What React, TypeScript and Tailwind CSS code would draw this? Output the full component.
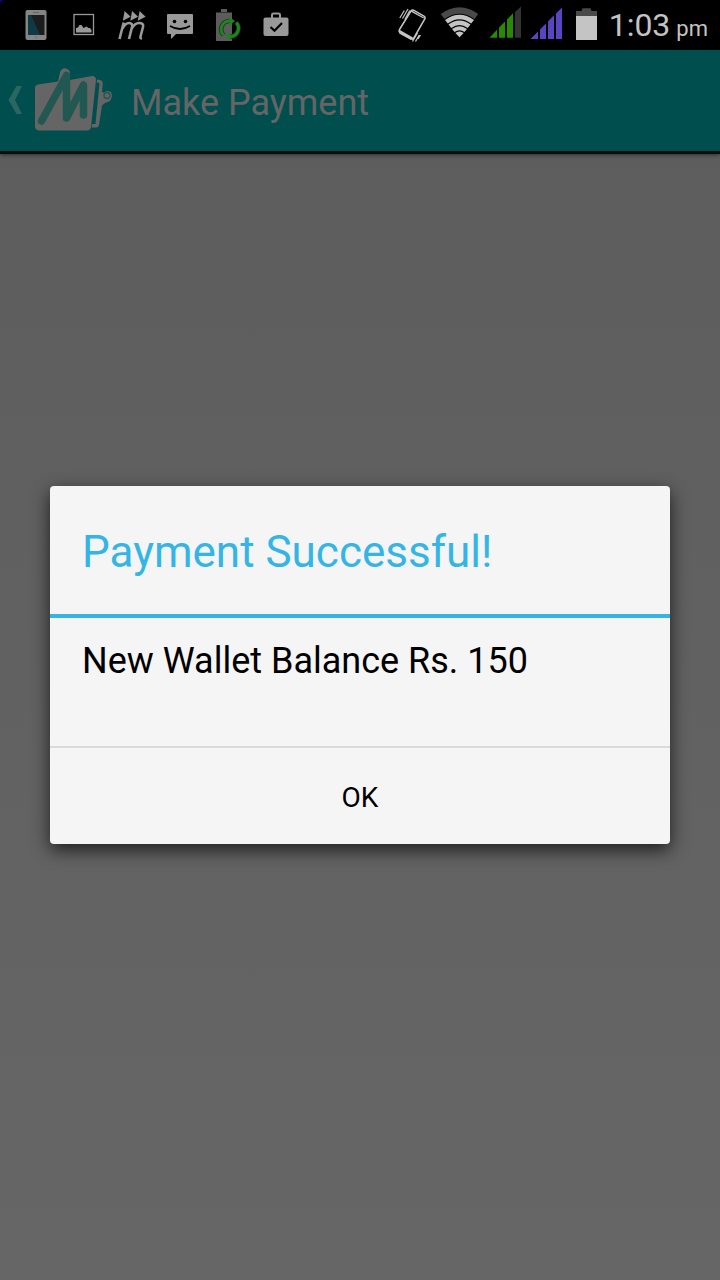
import React from "react";

function NotificationIcons() {
  return (
    <div className="flex pl-3">
      <svg viewBox="12 0 48 50" className="h-[50px] w-12" aria-hidden="true">
        <rect x="25.500" y="10" width="21" height="30" rx="2" fill="#858585" />
        <rect x="28" y="15" width="16.5" height="20" fill="#1c1c1c" />
        <path d="M28 15h3l9 20H28z" fill="#0e3a45" />
        <path d="M33 12.5h6" stroke="#666" strokeWidth="1" />
        <circle cx="36" cy="37.5" r="1.2" fill="#777" />
      </svg>
      <svg viewBox="60 0 48 50" className="h-[50px] w-12" aria-hidden="true">
        <rect x="74" y="14.5" width="19.5" height="20" fill="none" stroke="#999" strokeWidth="1.3" />
        <path d="M76 32.500v-4.500l2-.5 1.500-2.500h2l2 3 3-1.500 2 1.500h1.500l1.500 2v2.500z" fill="#999" />
      </svg>
      <svg viewBox="108 0 48 50" className="h-[50px] w-12" aria-hidden="true">
        <path d="M122.800 20.800l1.800-9.800 6 5.800zM130.300 20.800l1.800-9.800 6 5.800zM137.800 20.800l1.800-9.800 6 5.800z" fill="#999" />
        <path
          d="M119.500 39l4.200-16.500M122.500 28.500q3-5.500 6.500-5.500 4 0 3 4l-3 12M131.800 28.500q3-5.500 7.200-5.500 5 0 4 4l-2.500 9.500q-.5 2 1.500 1.800"
          fill="none"
          stroke="#999"
          strokeWidth="2.600"
        />
      </svg>
      <svg viewBox="156 0 48 50" className="h-[50px] w-12" aria-hidden="true">
        <path d="M168 14h24q1 0 1 1v18q0 1-1 1h-16l-5 5v-5h-3q-1 0-1-1V15q0-1 1-1z" fill="#999" />
        <circle cx="174.500" cy="21.500" r="1.800" />
        <circle cx="185.500" cy="21.500" r="1.800" />
        <path d="M170 26q10 6 20 0" fill="none" stroke="#000" strokeWidth="1.800" />
      </svg>
      <svg viewBox="204 0 48 50" className="h-[50px] w-12" aria-hidden="true">
        <path d="M221 9h6v3.500h5V41h-16V12.500h5z" fill="#5c5c5c" />
        <path d="M220 12.500h8" stroke="#333" strokeWidth="1" />
        <g fill="none" stroke="#123c12" strokeWidth="4.600">
          <path d="M223.500 35a8.300 8.300 0 0 1 6.500-14M236.200 22.500a8.300 8.300 0 0 1-6.200 14" />
        </g>
        <g fill="none" stroke="#238023" strokeWidth="3">
          <path d="M223.500 35a8.300 8.300 0 0 1 6.500-14M236.200 22.500a8.300 8.300 0 0 1-6.200 14" />
        </g>
        <path d="M229.500 17l5.500 4-5.500 4.500zM230.500 40.500l-5.500-4 5.500-4.500z" fill="#238023" />
      </svg>
      <svg viewBox="252 0 48 50" className="h-[50px] w-12" aria-hidden="true">
        <rect x="263.500" y="17.500" width="25" height="18.500" rx="2" fill="#999" />
        <path d="M272 18v-3q0-1.500 1.500-1.500h5q1.500 0 1.500 1.500v3" fill="none" stroke="#999" strokeWidth="2" />
        <path d="M270.500 27l4 3.800 7.500-7.800" fill="none" stroke="#000" strokeWidth="2.200" />
      </svg>
    </div>
  );
}

function SystemIcons() {
  return (
    <div className="flex items-center">
      <svg viewBox="396 0 204 50" className="h-[50px] w-[204px]" aria-hidden="true">
        <g fill="none" stroke="#c4c4c4">
          <path
            d="M400.500 29.500l11.500-18.500q1-1.500 2.500-.8l10.500 6q1.700 1 .8 2.800l-11 19q-1 1.700-2.700.8l-10.500-6q-2-1.300-1.100-3.300z"
            strokeWidth="1.500"
          />
          <path d="M403.500 18.500l5.500-9.500M405.800 19.500l5-9M400.800 18l4.500-7.500M413.500 41.500l5-8.500M416.500 41.500l3.800-6.500M419 39l2.500-4" strokeWidth="1.200" />
        </g>
        <path d="M400 29.500l14 8-2 2.500-11-6q-2-1.500-1-4.500zM412 10l13 7.500-.5 1-13-7z" fill="#c4c4c4" />
        <path d="M441.800 14q18.700-13.500 37.400 0l-3.700 5q-15-10.500-30 0z" fill="#494949" />
        <path d="M446 20q14.500-10.500 29 0l-2.800 3.500q-11.700-8.500-23.400 0z" fill="#c4c4c4" />
        <path d="M449.500 24.500q11-8 22 0l-2.800 3.500q-8.200-6-16.400 0z" fill="#c4c4c4" />
        <path d="M453 29q7.500-5.300 15 0l-2.500 3q-5-3.700-10 0z" fill="#c4c4c4" />
        <path d="M456.300 33q4.200-3 8.400 0l-4.200 4.200z" fill="#c4c4c4" />
        <path d="M490.500 37.800l7.500-8v8zM500 37.800v-10.300l6-6v16.300zM508 37.800V19.500l6-6.200v24.500z" fill="#278a03" />
        <path d="M516 37.800V12l6-5.500v31.300z" fill="#333" />
        <path d="M531.500 39l7.500-7.500V39zM541 39v-9.500l6-6V39zM549 39V21.500l6-6.300V39zM557 39V13.500l6-6V39z" fill="#5945c1" />
        <path d="M577 16v-5h5.500l1-2.700h8l1 2.700h5.500v5z" fill="#494949" />
        <path d="M577 16h21v24h-21z" fill="#c4c4c4" />
      </svg>
      <time className="flex items-baseline gap-[6px] pt-1 pr-3 pl-[10px] text-[32px] leading-[38px] text-[#c4c4c4]">
        <span>1:03</span>
        <span className="text-[22px]">pm</span>
      </time>
    </div>
  );
}

function WalletLogo() {
  return (
    <svg viewBox="0 0 124 101" className="h-[101px] w-[124px]" aria-hidden="true">
      <path d="M16.500 36h5.500l-7 14 7 14h-5.500l-8-14z" fill="#2b6762" />
      <path d="M97 29.500l3 .5q3 .5 2.700 4l-.7 8q2 1.500 4-.8 2-.7 4 .3 2.500 2 1.800 5.500-1.300 5-6 5.500-2 1-3.800 3l-3 19.500q-.5 2.500-3 2.500h-4.500l.7-3.500h3.300l4-41-2.800-.5z" fill="#656565" />
      <circle cx="107" cy="45.500" r="3" fill="#656565" stroke="#215852" strokeWidth="1.300" />
      <path d="M38 34.500l20-3 2-9q2-5 6-4 4 1 4 5v6.500l22-4q4 0 4 4l-5 47q-.5 3.500-4 3.500H39q-4-.5-4-4V38q0-3 3-3.500z" fill="#656565" />
      <path d="M41.500 71L66.500 25.500 66.500 68 83.500 35v30" fill="none" stroke="#215852" strokeWidth="7.500" strokeLinecap="round" strokeLinejoin="round" />
    </svg>
  );
}

export default function App() {
  return (
    <div className="flex min-h-screen flex-col bg-linear-to-b from-[#5c5c5c] to-[#666] font-[Roboto,sans-serif]">
      <div className="relative flex h-[50px] items-center justify-between bg-black">
        <span className="absolute top-0 left-0 size-[2px] rounded-br-full bg-[#0000d0]" />
        <NotificationIcons />
        <SystemIcons />
      </div>

      <div className="relative flex flex-1 flex-col">
        <header className="flex items-center border-b-[3px] border-[#080c0c] bg-[#004f4e] shadow-[0_1px_4px_rgba(0,0,0,0.5)]">
          <a href="#back" aria-label="Back">
            <WalletLogo />
          </a>
          <h1 className="pt-1 pl-[7px] text-[36px] leading-[42px] text-[#656565]">Make Payment</h1>
        </header>

        <div className="absolute inset-0 flex items-center justify-center px-[50px]">
          <div
            role="dialog"
            aria-modal="true"
            aria-labelledby="dialog-title"
            className="w-full overflow-hidden rounded-[4px] bg-[#f5f5f5] shadow-[0_6px_18px_rgba(0,0,0,0.7)]"
          >
            <h2
              id="dialog-title"
              className="border-b-4 border-[#35b5e5] px-8 pt-10 pb-9 text-[44px] leading-[52px] text-[#35b5e5]"
            >
              Payment Successful!
            </h2>
            <p className="px-8 pt-[22px] pb-[64px] text-[36px] leading-[42px] text-black">
              New Wallet Balance Rs. 150
            </p>
            <button
              type="button"
              className="block h-[98px] w-full border-t-2 border-[#dadada] pt-1 text-[28px] leading-[34px] text-black"
            >
              OK
            </button>
          </div>
        </div>
      </div>
    </div>
  );
}
